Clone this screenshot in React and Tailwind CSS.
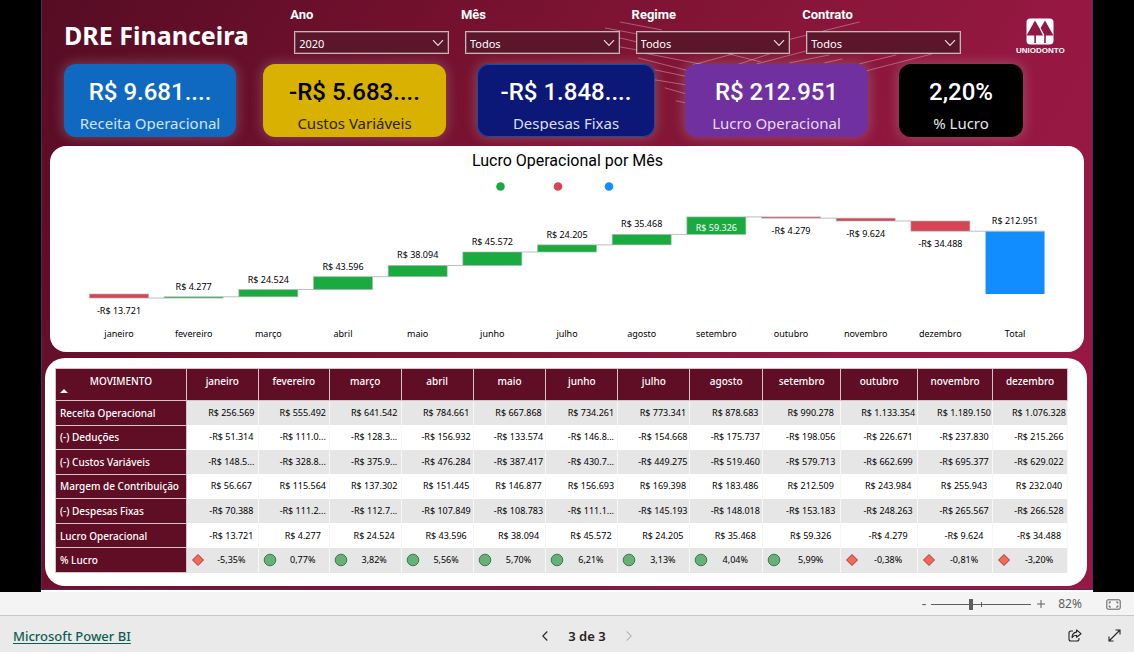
import React, { useState } from "react";

const filters = [
  { id: "ano", label: "Ano", options: ["2020", "2021"] },
  { id: "mes", label: "Mês", options: ["Todos", "janeiro"] },
  { id: "regime", label: "Regime", options: ["Todos", "Caixa"] },
  { id: "contrato", label: "Contrato", options: ["Todos", "Ativo"] },
];

const cards = [
  { label: "Receita Operacional", value: "R$ 9.681....", style: "mr-[27px] bg-[#0f69c1] text-white", sub: "text-[#d3e3f3]" },
  { label: "Custos Variáveis", value: "-R$ 5.683....", style: "mr-[31px] bg-[#d9b100] text-black", sub: "text-[#2a2300]" },
  { label: "Despesas Fixas", value: "-R$ 1.848....", style: "mr-[30px] bg-[#0c1878] text-white ring-1 ring-inset ring-[#154fa5]", sub: "text-[#dcdeee]" },
  { label: "Lucro Operacional", value: "R$ 212.951", style: "mr-[31px] bg-[#7030a0] text-white", sub: "text-[#e6daef]" },
  { label: "% Lucro", value: "2,20%", style: "bg-black text-white", sub: "text-[#e6e6e6]" },
];

const months = [
  "janeiro", "fevereiro", "março", "abril", "maio", "junho",
  "julho", "agosto", "setembro", "outubro", "novembro", "dezembro",
];

const results = [-13721, 4277, 24524, 43596, 38094, 45572, 24205, 35468, 59326, -4279, -9624, -34488];

// The monthly figures are rounded, so the yearly total is kept apart.
const total = 212951;

const rows = [
  ["Receita Operacional", "R$ 256.569", "R$ 555.492", "R$ 641.542", "R$ 784.661", "R$ 667.868", "R$ 734.261", "R$ 773.341", "R$ 878.683", "R$ 990.278", "R$ 1.133.354", "R$ 1.189.150", "R$ 1.076.328"],
  ["(-) Deduções", "-R$ 51.314", "-R$ 111.0...", "-R$ 128.3...", "-R$ 156.932", "-R$ 133.574", "-R$ 146.8...", "-R$ 154.668", "-R$ 175.737", "-R$ 198.056", "-R$ 226.671", "-R$ 237.830", "-R$ 215.266"],
  ["(-) Custos Variáveis", "-R$ 148.5...", "-R$ 328.8...", "-R$ 375.9...", "-R$ 476.284", "-R$ 387.417", "-R$ 430.7...", "-R$ 449.275", "-R$ 519.460", "-R$ 579.713", "-R$ 662.699", "-R$ 695.377", "-R$ 629.022"],
  ["Margem de Contribuição", "R$ 56.667", "R$ 115.564", "R$ 137.302", "R$ 151.445", "R$ 146.877", "R$ 156.693", "R$ 169.398", "R$ 183.486", "R$ 212.509", "R$ 243.984", "R$ 255.943", "R$ 232.040"],
  ["(-) Despesas Fixas", "-R$ 70.388", "-R$ 111.2...", "-R$ 112.7...", "-R$ 107.849", "-R$ 108.783", "-R$ 111.1...", "-R$ 145.193", "-R$ 148.018", "-R$ 153.183", "-R$ 248.263", "-R$ 265.567", "-R$ 266.528"],
  ["Lucro Operacional", "-R$ 13.721", "R$ 4.277", "R$ 24.524", "R$ 43.596", "R$ 38.094", "R$ 45.572", "R$ 24.205", "R$ 35.468", "R$ 59.326", "-R$ 4.279", "-R$ 9.624", "-R$ 34.488"],
  ["% Lucro", "-5,35%", "0,77%", "3,82%", "5,56%", "5,70%", "6,21%", "3,13%", "4,04%", "5,99%", "-0,38%", "-0,81%", "-3,20%"],
];

// Column widths in share of the table.
const columns = [131, 72, 71, 72, 72, 73, 72, 72, 73, 78, 77, 75, 75];
const tableWidth = columns.reduce((a, b) => a + b, 0);

const backdropLines = [
  [579, 22, 621, 30], [564, 28, 596, 34], [579, 38, 596, 42], [579, 47, 596, 50],
  [597, 52, 700, 72], [597, 58, 648, 71], [614, 70, 648, 77], [614, 80, 645, 85],
  [624, 88, 645, 94], [635, 101, 645, 103], [652, 65, 700, 52], [696, 65, 732, 53],
  [716, 64, 766, 51], [739, 42, 819, 22], [749, 63, 789, 55], [784, 63, 802, 59],
  [819, 64, 856, 55], [826, 71, 892, 54], [680, 52, 720, 62],
];

function formatMoney(n) {
  const digits = String(Math.abs(n)).replace(/\B(?=(\d{3})+$)/g, ".");
  return (n < 0 ? "-" : "") + "R$ " + digits;
}

function Backdrop() {
  return (
    <svg viewBox="0 0 1052 110" className="pointer-events-none absolute inset-x-0 top-0 w-full" aria-hidden="true">
      {backdropLines.map(([x1, y1, x2, y2], i) => (
        <line key={i} x1={x1} y1={y1} x2={x2} y2={y2} stroke="#d9a9b8" strokeWidth="1" strokeOpacity="0.5" />
      ))}
    </svg>
  );
}

function Logo() {
  return (
    <div className="flex flex-col items-center">
      <svg width="28" height="27" viewBox="0 0 28 27" aria-hidden="true">
        <rect x="0.5" y="0.5" width="27" height="26" rx="4" fill="#fff" />
        <path d="M9 2.5 0.5 17.5H17L13.6 10.4ZM19 2.5 14.6 10 18.6 17.5H27.5Z" fill="#921741" />
        <path d="M8.3 17h1.6v8H8.3ZM18.2 17h1.6v8h-1.6Z" fill="#921741" />
      </svg>
      <span className="font-['Liberation_Sans',sans-serif] text-[8px] font-bold leading-[11px] text-white">UNIODONTO</span>
    </div>
  );
}

function Filter({ id, label, options }) {
  const [value, setValue] = useState(options[0]);
  return (
    <div className="flex flex-1 flex-col">
      <label htmlFor={id} className="mb-2 font-[Roboto,sans-serif] text-[13px] font-bold leading-4 text-white">
        {label}
      </label>
      <div className="relative ml-1">
        <select
          id={id}
          value={value}
          onChange={(e) => setValue(e.target.value)}
          className="block h-[23px] w-full appearance-none border border-[#c9b4bb] bg-[#5c162b] pl-1 pr-6 pt-0.5 text-[11px] leading-4 text-white shadow-[inset_0_0_0_1px_#7d4958]"
        >
          {options.map((o) => (
            <option key={o}>{o}</option>
          ))}
        </select>
        <svg width="12" height="8" viewBox="0 0 12 8" className="pointer-events-none absolute right-[5px] top-2" aria-hidden="true">
          <path d="M1 1.2 6 6.5 11 1.2" fill="none" stroke="#e6dade" strokeWidth="1.2" />
        </svg>
      </div>
    </div>
  );
}

function WaterfallChart() {
  const zero = 148;
  const unit = 3390;
  const pitch = 74.67;
  const barWidth = 59;
  let running = 0;
  const bars = results.map((v, i) => {
    const from = running;
    running += v;
    return { x: 39.5 + i * pitch, top: zero - Math.max(from, running) / unit, bottom: zero - Math.min(from, running) / unit, end: zero - running / unit, v };
  });
  const totalX = 39.5 + 12 * pitch;
  const totalTop = zero - total / unit;
  return (
    <svg viewBox="0 0 1034 206" className="block w-full text-[9px]" role="img" aria-label="Lucro Operacional por Mês">
      <text x="517.5" y="20" textAnchor="middle" className="font-[Roboto,sans-serif] text-[16px]">
        Lucro Operacional por Mês
      </text>
      <circle cx="450.5" cy="40.5" r="4.3" fill="#1aab40" />
      <circle cx="508" cy="40.5" r="4.3" fill="#d64554" />
      <circle cx="559" cy="40.5" r="4.3" fill="#118dff" />
      {bars.map((b, i) => {
        const inside = b.bottom - b.top > 16;
        const labelY = b.v < 0 ? b.bottom + 16 : inside ? b.bottom - 3 : b.top - 7;
        return (
          <g key={months[i]}>
            <rect x={b.x} y={b.top} width={barWidth} height={b.bottom - b.top} fill={b.v < 0 ? "#d64554" : "#1aab40"} stroke="#b3b3b3" strokeWidth="0.8" strokeOpacity="0.8" />
            <line x1={b.x + barWidth} y1={b.end} x2={b.x + pitch} y2={b.end} stroke="#bdbdbd" />
            <text x={b.x + barWidth / 2} y={labelY} textAnchor="middle" fill={inside ? "#fff" : "#000"}>
              {formatMoney(b.v)}
            </text>
            <text x={b.x + barWidth / 2} y="191" textAnchor="middle" fill="#000">{months[i]}</text>
          </g>
        );
      })}
      <rect x={totalX} y={totalTop} width={barWidth} height={zero - totalTop} fill="#118dff" />
      <line x1={totalX} y1={totalTop} x2={totalX + barWidth} y2={totalTop} stroke="#bdbdbd" />
      <text x={totalX + barWidth / 2} y={totalTop - 7} textAnchor="middle" fill="#000">{formatMoney(total)}</text>
      <text x={totalX + barWidth / 2} y="191" textAnchor="middle" fill="#000">Total</text>
    </svg>
  );
}

function Indicator({ negative }) {
  return (
    <svg width="14" height="14" viewBox="0 0 14 14" className="shrink-0" aria-hidden="true">
      {negative ? (
        <path d="M7 1.5 12.5 7 7 12.5 1.5 7Z" fill="#f2695c" stroke="#a83c33" />
      ) : (
        <circle cx="7" cy="7" r="5.8" fill="#66b079" stroke="#3f7a50" />
      )}
    </svg>
  );
}

function ResultTable() {
  return (
    <table className="h-[205px] w-full table-fixed border-collapse text-black">
      <colgroup>
        {columns.map((w, i) => (
          <col key={i} style={{ width: (w / tableWidth) * 100 + "%" }} />
        ))}
      </colgroup>
      <thead>
        <tr className="h-8 bg-[#600d26] text-[10px] leading-4 text-white">
          <th scope="col" aria-sort="ascending" className="border border-[#d5c3c9] p-0 font-medium">
            <button type="button" className="relative block h-[30px] w-full pb-2 text-center">
              MOVIMENTO
              <svg width="8" height="4" viewBox="0 0 8 4" className="absolute bottom-[7px] left-1" aria-hidden="true">
                <path d="M0 4 4 0 8 4Z" fill="#fff" />
              </svg>
            </button>
          </th>
          {months.map((m) => (
            <th key={m} scope="col" className="border border-[#d5c3c9] p-0 pb-2 font-medium">
              {m}
            </th>
          ))}
        </tr>
      </thead>
      <tbody>
        {rows.map(([name, ...values]) => (
          <tr key={name} className="odd:bg-[#e6e6e6]">
            <th scope="row" className="whitespace-nowrap border border-[#d5c3c9] bg-[#600d26] p-0 pl-1 text-left text-[10px] font-medium leading-4 text-white">
              {name}
            </th>
            {values.map((v, i) => (
              <td key={i} className="whitespace-nowrap border-r border-[#f7f7f7] p-0 text-[9px] leading-4">
                {name === "% Lucro" ? (
                  <div className="flex items-center pl-1">
                    <Indicator negative={v.startsWith("-")} />
                    <span className="flex-1 text-center">{v}</span>
                  </div>
                ) : (
                  <div className="pl-[18px] text-center">{v}</div>
                )}
              </td>
            ))}
          </tr>
        ))}
      </tbody>
    </table>
  );
}

function StatusBar() {
  const [zoom, setZoom] = useState(82);
  return (
    <div className="flex h-6 items-center justify-end border-b border-[#c8c8c8] bg-[#f4f4f4] pr-[13px] pt-px text-[#605e5c]">
      <button type="button" aria-label="Reduzir" className="w-3 text-center text-sm leading-4">-</button>
      <div className="relative mx-px flex h-4 w-[100px] items-center">
        <input
          type="range"
          aria-label="Zoom"
          min="2"
          max="202"
          value={zoom}
          onChange={(e) => setZoom(Number(e.target.value))}
          className="h-px w-full appearance-none bg-[#605e5c] [&::-webkit-slider-thumb]:h-[11px] [&::-webkit-slider-thumb]:w-1 [&::-webkit-slider-thumb]:appearance-none [&::-webkit-slider-thumb]:bg-[#605e5c]"
        />
        <span className="pointer-events-none absolute left-1/2 top-[6px] h-[5px] w-px bg-[#605e5c]" />
      </div>
      <button type="button" aria-label="Ampliar" className="ml-[5px] flex w-2 justify-center">
        <svg width="8" height="8" viewBox="0 0 8 8" aria-hidden="true">
          <path d="M4 0V8M0 4H8" stroke="currentColor" />
        </svg>
      </button>
      <span className="ml-3 w-[26px] text-center text-[12px] leading-4">{zoom}%</span>
      <button type="button" aria-label="Ajustar à página" className="ml-[23px]">
        <svg width="15" height="11" viewBox="0 0 15 11" fill="none" stroke="currentColor" aria-hidden="true">
          <rect x="0.8" y="0.8" width="13.4" height="9.4" rx="1.2" />
          <path d="M5 3H3.2V4.6M3.2 6.4V8H5M10 3h1.8v1.6M11.8 6.4V8H10" />
        </svg>
      </button>
    </div>
  );
}

function Footer() {
  return (
    <footer className="grid h-9 grid-cols-[1fr_auto_1fr] items-center bg-[#eaeaea] pl-[13px] pr-[13px] pt-[3px]">
      <a href="#powerbi" className="justify-self-start text-[13px] font-medium leading-5 text-[#0b5f50] underline underline-offset-2">Microsoft Power BI</a>
      <nav className="ml-10 flex items-center gap-5 text-[#252423]">
        <button type="button" aria-label="Página anterior">
          <svg width="6" height="10" viewBox="0 0 6 10" fill="none" stroke="currentColor" strokeWidth="1.1"><path d="M5.3.5.8 5l4.5 4.5" /></svg>
        </button>
        <span className="text-[13px] font-semibold leading-5">3 de 3</span>
        <button type="button" aria-label="Próxima página" className="text-[#b8b8b8]">
          <svg width="6" height="10" viewBox="0 0 6 10" fill="none" stroke="currentColor" strokeWidth="1.1"><path d="M.7.5 5.2 5 .7 9.5" /></svg>
        </button>
      </nav>
      <div className="flex items-center gap-[26px] justify-self-end text-[#252423]">
        <button type="button" aria-label="Compartilhar">
          <svg width="14" height="13" viewBox="0 0 14 13" fill="none" stroke="currentColor" strokeWidth="1.1">
            <path d="M5 2H3A2 2 0 0 0 1 4v6a2 2 0 0 0 2 2h6a2 2 0 0 0 2-2V9" />
            <path d="M8.5 1 13 4.7 8.5 8.2V6.2C6.3 6.2 5 7 4 8.6 4.2 5.6 5.8 3.4 8.5 3.1Z" strokeLinejoin="round" />
          </svg>
        </button>
        <button type="button" aria-label="Tela cheia">
          <svg width="13" height="13" viewBox="0 0 13 13" fill="none" stroke="currentColor" strokeWidth="1.1">
            <path d="M1 12 12 1M7.5 1H12V5.5M1 7.5V12H5.5" />
          </svg>
        </button>
      </div>
    </footer>
  );
}

export default function App() {
  return (
    <div className="flex min-h-screen flex-col bg-[#eaeaea] font-['Noto_Sans','Open_Sans',sans-serif]">
      <div className="bg-black px-[41px]">
        <main className="relative border-x border-b border-[#4d2e63] bg-[linear-gradient(120deg,#560c24,#74112f_30%,#871639_55%,#961842_75%,#991843)] pb-[3px]">
          <Backdrop />
          <header className="relative grid grid-cols-[226fr_670fr_123fr] pl-[22px] pr-2 pt-[7px]">
            <h1 className="pt-3 text-[25px] font-bold leading-8 text-white">DRE Financeira</h1>
            <div className="flex gap-3">
              {filters.map((f) => (
                <Filter key={f.id} {...f} />
              ))}
            </div>
            <div className="flex justify-center pl-9 pt-[11px]">
              <Logo />
            </div>
          </header>

          <section className="relative mt-2 grid grid-cols-[199fr_214fr_208fr_214fr_124fr] pl-[22px] pr-[69px]">
            {cards.map((c) => (
              <article key={c.label} className={"h-[73px] rounded-xl shadow-[0_0_12px_2px_rgba(200,200,200,0.25)] " + c.style}>
                <div className="flex h-[67px] flex-col items-center overflow-hidden pt-[11px]">
                  <p className="whitespace-nowrap font-[Roboto,sans-serif] text-[24px] font-medium leading-[34px]">{c.value}</p>
                  <h2 className={"mt-0.5 whitespace-nowrap text-[15px] leading-6 " + c.sub}>{c.label}</h2>
                </div>
              </article>
            ))}
          </section>

          <section className="relative mx-2 mt-[9px] rounded-2xl bg-white">
            <WaterfallChart />
          </section>

          <section className="relative ml-[3px] mr-[5px] mt-[6px] rounded-[20px] bg-white pb-[13px] pl-[10px] pr-[19px] pt-[10px]">
            <ResultTable />
          </section>
        </main>
      </div>
      <div className="h-0.5 bg-black px-[41px]">
        <div className="h-full bg-white" />
      </div>
      <StatusBar />
      <Footer />
    </div>
  );
}
